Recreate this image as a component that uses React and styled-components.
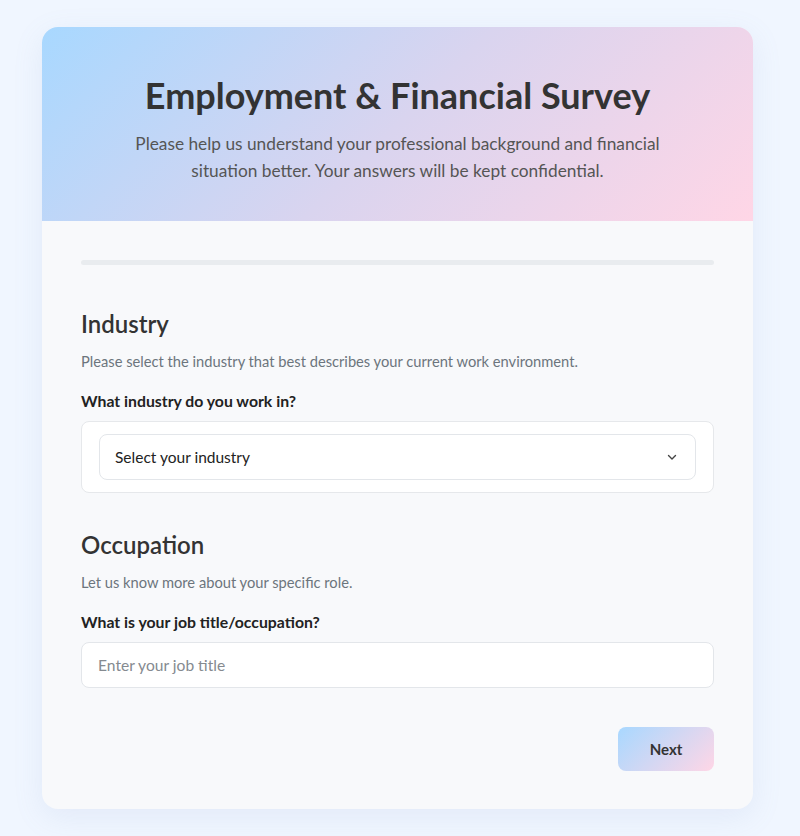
import React, { useState } from 'react';
import styled, { createGlobalStyle } from 'styled-components';

const GlobalStyle = createGlobalStyle`
  * { box-sizing: border-box; }
  body {
    margin: 0;
    background: #f0f6ff;
    font-family: Lato, "Segoe UI", "Noto Sans", sans-serif;
    color: #333;
  }
`;

const Page = styled.div`
  padding: 27px 47px 28px 42px;
`;

const Card = styled.div`
  width: 711px;
  background: #f8f9fb;
  border-radius: 16px;
  overflow: hidden;
  box-shadow: 0 8px 30px rgba(120, 150, 200, 0.12);
`;

const Header = styled.header`
  padding: 49px 40px 37px;
  text-align: center;
  background: linear-gradient(135deg, #a8d8ff 0%, #d9d4ef 50%, #ffd6e6 100%);
`;

const Title = styled.h1`
  margin: 0 0 16px;
  font-size: 36px;
  line-height: 38px;
  font-weight: 700;
  color: #333;
`;

const Subtitle = styled.p`
  max-width: 560px;
  margin: 0 auto;
  font-size: 17.3px;
  line-height: 27px;
  color: #555;
`;

const Body = styled.div`
  padding: 39px 39px 38px;
`;

const Progress = styled.div`
  height: 5px;
  border-radius: 3px;
  background: #e9ecef;
  margin-bottom: 44px;
  overflow: hidden;
`;

const ProgressFill = styled.div`
  height: 100%;
  background: linear-gradient(90deg, #a8d8ff, #ffd6e6);
`;

const Section = styled.section`
  margin-bottom: ${p => p.$last ? '39px' : '37px'};
`;

const SectionTitle = styled.h2`
  margin: 0 0 13px;
  font-size: 24px;
  line-height: 29px;
  font-weight: 600;
  color: #333;
`;

const SectionText = styled.p`
  margin: 0 0 18px;
  font-size: 14.7px;
  line-height: 21px;
  color: #6c757d;
`;

const Label = styled.label`
  display: block;
  margin-bottom: 9px;
  font-size: 15.8px;
  line-height: 22px;
  font-weight: 700;
  color: #222;
`;

const SelectBox = styled.div`
  background: #fff;
  border: 1px solid #e6e8eb;
  border-radius: 8px;
  padding: 12px 17px;
`;

const SelectWrap = styled.div`
  position: relative;
`;

const Select = styled.select`
  appearance: none;
  width: 100%;
  height: 46px;
  padding: 0 40px 0 15px;
  border: 1px solid #e3e6ea;
  border-radius: 8px;
  background: #fff;
  font-family: inherit;
  font-size: 15.5px;
  color: #222;
  outline: none;
`;

const Chevron = styled.svg`
  position: absolute;
  right: 18px;
  top: 50%;
  transform: translateY(-50%);
  pointer-events: none;
`;

const Input = styled.input`
  width: 100%;
  height: 46px;
  padding: 0 16px;
  border: 1px solid #e3e6ea;
  border-radius: 8px;
  background: #fff;
  font-family: inherit;
  font-size: 15.6px;
  color: #222;
  outline: none;
  &::placeholder { color: #858a90; }
`;

const Actions = styled.div`
  display: flex;
  justify-content: flex-end;
`;

const NextButton = styled.button`
  width: 96px;
  height: 44px;
  border: none;
  border-radius: 8px;
  background: linear-gradient(135deg, #a8d8ff, #ffd6e6);
  font-family: Lato, sans-serif;
  font-size: 15px;
  font-weight: 700;
  color: #333;
  cursor: pointer;
`;

export default function App() {
  const [industry, setIndustry] = useState('');
  const [job, setJob] = useState('');

  return (
    <Page>
      <GlobalStyle />
      <Card>
        <Header>
          <Title>Employment &amp; Financial Survey</Title>
          <Subtitle>
            Please help us understand your professional background and financial situation better. Your answers will be kept confidential.
          </Subtitle>
        </Header>
        <Body>
          <Progress><ProgressFill style={{ width: '0%' }} /></Progress>

          <Section>
            <SectionTitle>Industry</SectionTitle>
            <SectionText>Please select the industry that best describes your current work environment.</SectionText>
            <Label htmlFor="industry">What industry do you work in?</Label>
            <SelectBox>
              <SelectWrap>
                <Select id="industry" value={industry} onChange={e => setIndustry(e.target.value)}>
                  <option value="">Select your industry</option>
                  <option value="tech">Technology</option>
                  <option value="health">Healthcare</option>
                  <option value="finance">Finance</option>
                  <option value="education">Education</option>
                  <option value="other">Other</option>
                </Select>
                <Chevron width="12" height="12" viewBox="0 0 12 12" fill="none">
                  <path d="M2.5 4.5 6 8l3.5-3.5" stroke="#444" strokeWidth="1.4" strokeLinecap="round" strokeLinejoin="round" />
                </Chevron>
              </SelectWrap>
            </SelectBox>
          </Section>

          <Section $last>
            <SectionTitle>Occupation</SectionTitle>
            <SectionText>Let us know more about your specific role.</SectionText>
            <Label htmlFor="job">What is your job title/occupation?</Label>
            <Input id="job" placeholder="Enter your job title" value={job} onChange={e => setJob(e.target.value)} />
          </Section>

          <Actions>
            <NextButton>Next</NextButton>
          </Actions>
        </Body>
      </Card>
    </Page>
  );
}
